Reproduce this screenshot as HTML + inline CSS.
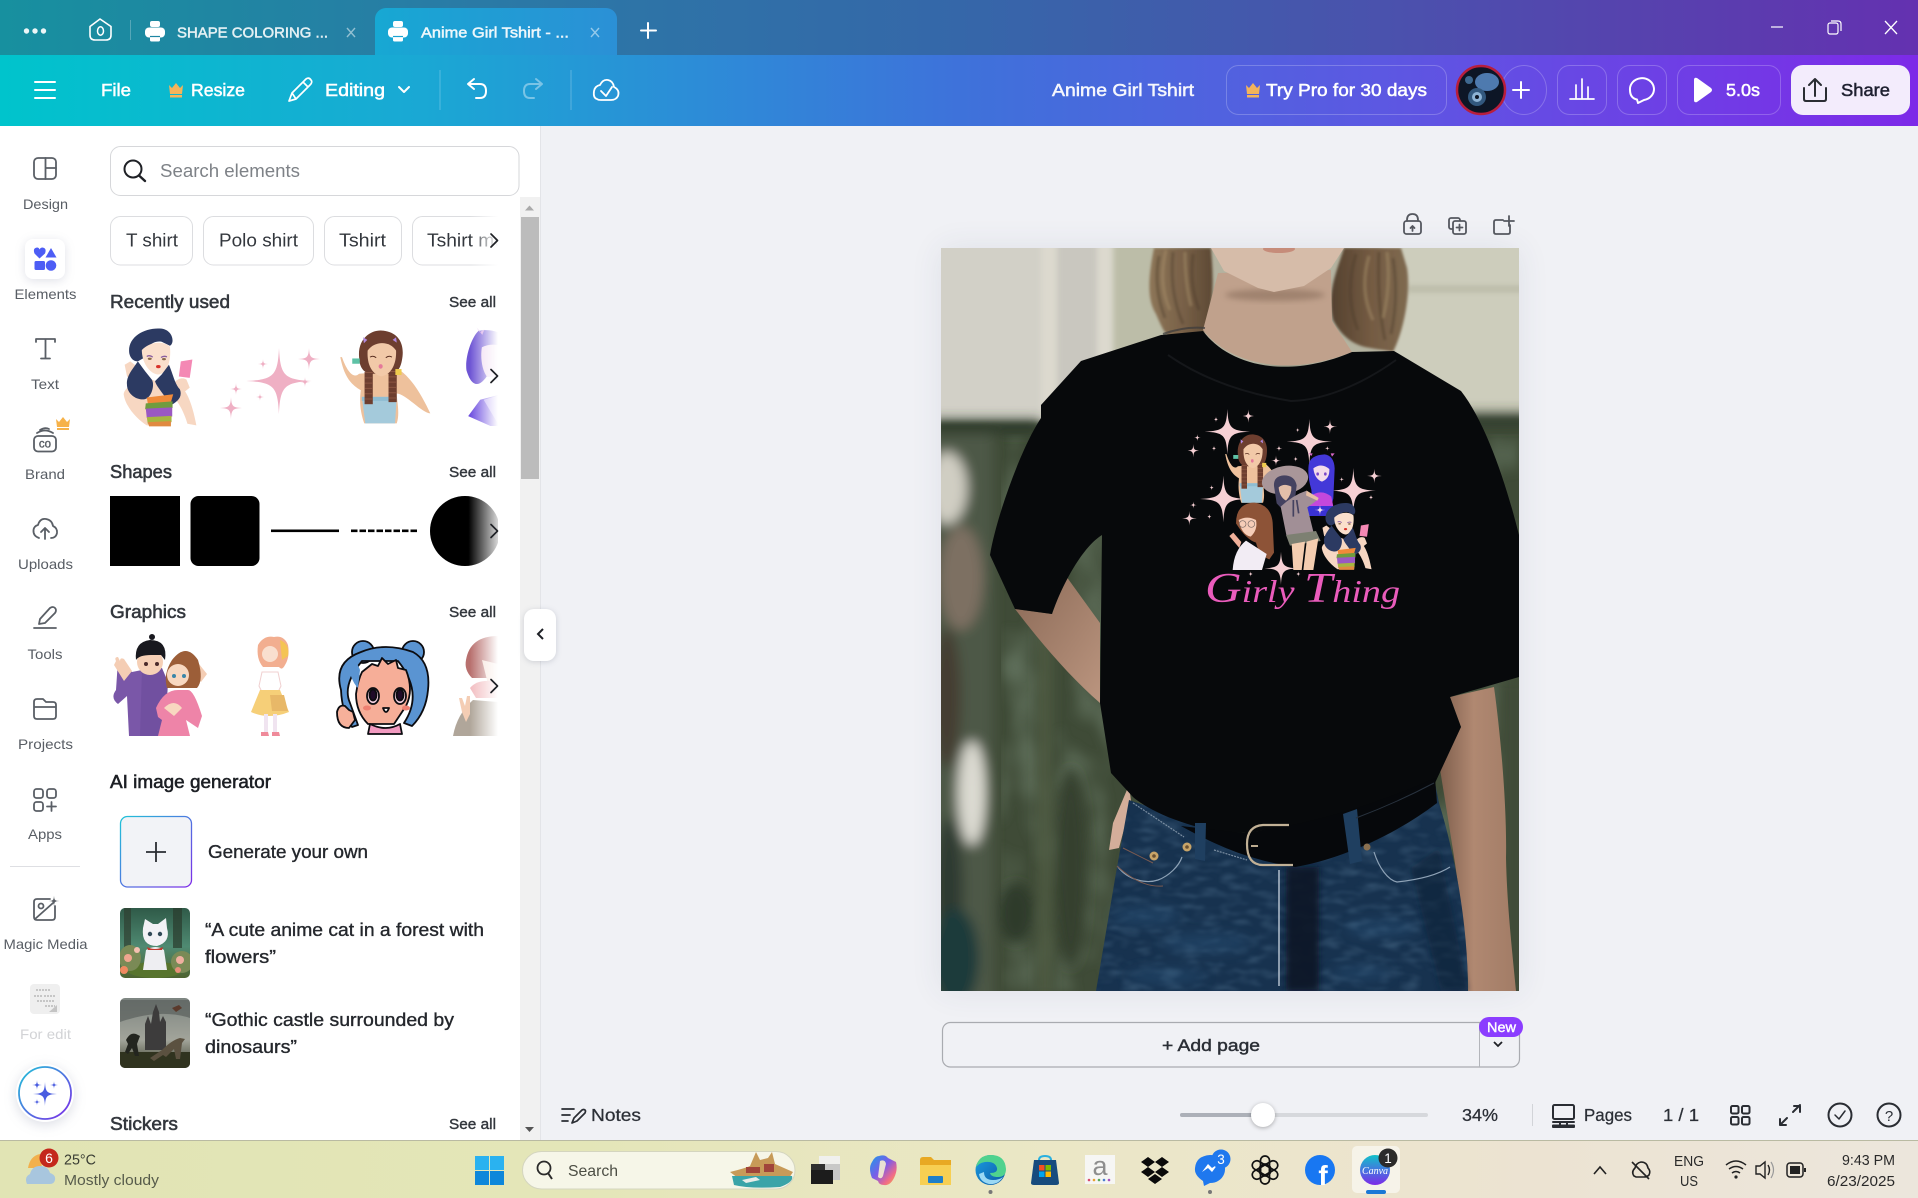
<!DOCTYPE html>
<html lang="en"><head><meta charset="utf-8"><title>Anime Girl Tshirt</title>
<style>
html,body{margin:0;padding:0;width:1918px;height:1198px;overflow:hidden;background:#f0f1f5}
.a{position:absolute}
#title{left:0;top:0;width:1918px;height:55px;background:linear-gradient(90deg,#17909f 0%,#2a7aa6 25%,#3567a9 50%,#4a52ad 72%,#6431b0 100%)}
#tool{left:0;top:55px;width:1918px;height:71px;background:linear-gradient(90deg,#00c4cc 0%,#1aa8d4 22%,#3e72da 50%,#5c58e2 72%,#7d2ae8 100%)}
#tab{left:375px;top:8px;width:242px;height:47px;border-radius:11px 11px 0 0;background:linear-gradient(90deg,#17a8d3,#2b90d6)}
#rail{left:0;top:126px;width:540px;height:1014px;background:#fff}
#track{left:520px;top:197px;width:20px;height:943px;background:#f1f1f1}
#thumb{left:521px;top:217px;width:18px;height:262px;background:#bcbcbc}
#line{left:540px;top:126px;width:1px;height:1014px;background:#e3e4e8}
#shadow{left:941px;top:248px;width:578px;height:743px;box-shadow:0 0 30px rgba(60,70,100,.09)}
#task{left:0;top:1140px;width:1918px;height:58px;background:linear-gradient(90deg,#e1e4b4 0%,#e4e6b8 30%,#ebe7c6 55%,#ece3d2 80%,#ece6dc 100%);border-top:1px solid #b9baa2;box-sizing:border-box}
svg{position:absolute;left:0;top:0}
text{font-family:"Liberation Sans","DejaVu Sans",sans-serif}
.w{fill:#fff;stroke:#fff;stroke-width:.5}
.lb{fill:#585d64;font-size:14px}
.ch{fill:#33373d;font-size:18px}
.hd{fill:#33373d;stroke:#33373d;stroke-width:.55;font-size:18px}
.sa{fill:#33373d;stroke:#33373d;stroke-width:.4;font-size:15px}
.bd{fill:#24272c;stroke:#24272c;stroke-width:.35;font-size:18px}
.tb{fill:#3a3d33;font-size:15px}
.ic{fill:none;stroke:#5a5f66;stroke-width:1.8;stroke-linecap:round;stroke-linejoin:round}
.wi{fill:none;stroke:#fff;stroke-width:2;stroke-linecap:round;stroke-linejoin:round}
.dk{fill:none;stroke:#2a2d33;stroke-width:2;stroke-linecap:round;stroke-linejoin:round}
.cv{fill:none;stroke:#1f2126;stroke-width:1.7;stroke-linecap:round;stroke-linejoin:round}
</style></head><body>
<div class="a" id="title"></div>
<div class="a" id="tool"></div>
<div class="a" id="tab"></div>
<div class="a" id="rail"></div>
<div class="a" id="track"></div>
<div class="a" id="thumb"></div>
<div class="a" id="line"></div>
<div class="a" id="shadow"></div>
<div class="a" id="task"></div>

<svg width="1918" height="1198" viewBox="0 0 1918 1198">
<defs>
<path id="st" d="M0-100C4-16 16-4 100 0C16 4 4 16 0 100C-4 16-16 4-100 0C-16-4-4-16 0-100Z"/>
<filter id="b12" x="-20%" y="-20%" width="140%" height="140%"><feGaussianBlur stdDeviation="6"/></filter>
<filter id="b3" x="-30%" y="-30%" width="160%" height="160%"><feGaussianBlur stdDeviation="3"/></filter>
<filter id="b1" x="-5%" y="-5%" width="110%" height="110%"><feGaussianBlur stdDeviation="1.300"/></filter>
<filter id="nG" x="0" y="0" width="100%" height="100%"><feTurbulence type="fractalNoise" baseFrequency=".03 .018" numOctaves="2" seed="4"/><feColorMatrix values="0 0 0 0 .13  0 0 0 0 .18  0 0 0 0 .12  2.400 0 0 0 -.95"/><feGaussianBlur stdDeviation="4"/></filter>
<filter id="nJ" x="0" y="0" width="100%" height="100%"><feTurbulence type="fractalNoise" baseFrequency=".05 .14" numOctaves="2" seed="8"/><feColorMatrix values="0 0 0 0 .2  0 0 0 0 .36  0 0 0 0 .52  2 0 0 0 -.9"/><feGaussianBlur stdDeviation="1.200"/></filter>
<clipPath id="jc"><path d="M188 552L175 625L155 743H527C527 680 515 610 498 555L494 535L300 590Z"/></clipPath>
<linearGradient id="gb" x1="0" y1="0" x2="1" y2="1"><stop offset="0" stop-color="#1fc4d8"/><stop offset="1" stop-color="#7d2ae8"/></linearGradient>
<linearGradient id="fade" x1="0" x2="1"><stop offset="0" stop-color="#fff" stop-opacity="0"/><stop offset="1" stop-color="#fff"/></linearGradient>
<linearGradient id="circ" x1="0" x2="1"><stop offset="0" stop-color="#000"/><stop offset=".55" stop-color="#000"/><stop offset="1" stop-color="#000" stop-opacity=".1"/></linearGradient>
<linearGradient id="cv" x1="0" y1="0" x2="0" y2="1"><stop offset="0" stop-color="#12c2c9"/><stop offset=".55" stop-color="#4a6fe0"/><stop offset="1" stop-color="#7d2ae8"/></linearGradient>
<linearGradient id="edge" x1="0" y1="0" x2="1" y2="1"><stop offset="0" stop-color="#1b9de2"/><stop offset="1" stop-color="#0c59a4"/></linearGradient>
<linearGradient id="cat" x1="0" y1="0" x2="0" y2="1"><stop offset="0" stop-color="#2f5a48"/><stop offset=".55" stop-color="#4f8a72"/><stop offset="1" stop-color="#4e6330"/></linearGradient>
<linearGradient id="cas" x1="0" y1="0" x2="0" y2="1"><stop offset="0" stop-color="#7d8581"/><stop offset=".6" stop-color="#a2a49a"/><stop offset="1" stop-color="#3b3f2c"/></linearGradient>
<linearGradient id="cop" x1="0" y1="0" x2="1" y2="1"><stop offset="0" stop-color="#1b9be8"/><stop offset=".45" stop-color="#7c5ce8"/><stop offset=".75" stop-color="#ef6a8a"/><stop offset="1" stop-color="#f8b73a"/></linearGradient>
<linearGradient id="armg" x1="0" x2="1"><stop offset="0" stop-color="#7e5e4c"/><stop offset=".45" stop-color="#b08871"/><stop offset="1" stop-color="#a27c66"/></linearGradient>
<linearGradient id="arml" x1="0" y1="0" x2="1" y2="1"><stop offset="0" stop-color="#8b6a57"/><stop offset="1" stop-color="#bb957f"/></linearGradient>
<linearGradient id="hairL" x1="0" x2="1"><stop offset="0" stop-color="#8d7658"/><stop offset=".5" stop-color="#7a6249"/><stop offset="1" stop-color="#5d4934"/></linearGradient>
<linearGradient id="hairR" x1="0" x2="1"><stop offset="0" stop-color="#54412f"/><stop offset=".5" stop-color="#735a42"/><stop offset="1" stop-color="#7f6a50"/></linearGradient>

<symbol id="gA" viewBox="350 585 230 305" preserveAspectRatio="none">
<path d="M355 790C358 770 375 770 385 745L440 745L500 770C530 740 560 800 575 885L548 880C540 850 520 810 505 800L498 885H425C400 870 360 830 355 790Z" fill="#f7d7c2"/>
<path d="M365 735L358 700L375 690L395 705L405 745L390 760Z" fill="#f7d7c2"/>
<path d="M500 775C505 750 525 735 545 745L555 770L530 790Z" fill="#f7d7c2"/>
<path d="M372 665C365 615 420 585 470 590C505 595 510 635 495 642L470 630C440 625 420 650 415 680L398 690C385 690 375 680 372 665Z" fill="#2c3a62"/>
<path d="M410 655C440 625 480 630 495 645C500 690 485 730 458 730C430 725 410 690 410 655Z" fill="#fadfcc"/>
<path d="M398 690L420 720L440 745C450 760 440 800 420 805C395 810 365 790 365 760C362 735 385 710 398 690Z" fill="#2c3a62"/>
<path d="M470 730L492 700C505 730 510 760 525 775C535 800 515 815 495 825C480 790 455 770 450 750Z" fill="#2c3a62"/>
<path d="M425 675q8-6 18 2M468 678q8-6 18-2" stroke="#8a5ea0" stroke-width="4" fill="none"/>
<ellipse cx="434" cy="682" rx="6" ry="3.500" fill="#8a6a4a"/><ellipse cx="477" cy="683" rx="6" ry="3.500" fill="#8a6a4a"/>
<ellipse cx="460" cy="706" rx="7" ry="5" fill="#d8322a"/>
<path d="M425 800L505 790L495 825L430 830Z" fill="#f08a3a"/>
<path d="M422 818L503 812V832L420 836Z" fill="#6f9c3f"/>
<path d="M422 834L502 830V858L425 862Z" fill="#9a58c2"/>
<path d="M425 860L500 856V875L428 880Z" fill="#a6b640"/>
<path d="M428 875L498 872V888H432Z" fill="#e08a40"/>
<path d="M528 690L563 684L555 740L522 736Z" fill="#f488b4"/>
</symbol>

<symbol id="gB" viewBox="955 595 298 290" preserveAspectRatio="none">
<path d="M985 680C995 730 1010 760 1045 780C1040 820 1045 850 1055 880H1150C1160 850 1150 810 1150 790C1175 790 1225 850 1248 850C1230 810 1200 750 1160 720L1040 730C1020 750 1000 710 990 680Z" fill="#eec19c"/>
<path d="M1048 800H1150L1145 880H1058Z" fill="#a4cadb"/>
<path d="M1048 800H1150V812H1048Z" fill="#8fbdd2"/>
<path d="M1040 680C1035 620 1080 595 1110 600C1155 605 1175 640 1165 690C1160 720 1145 730 1135 730L1070 730C1050 725 1040 705 1040 680Z" fill="#6d3e2f"/>
<path d="M1068 725V822M1138 722V816" stroke="#6d3e2f" stroke-width="24" fill="none"/>
<path d="M1068 725V822M1138 722V816" stroke="#8b5541" stroke-width="24" stroke-dasharray="3 13" fill="none"/>
<path d="M1065 660C1085 630 1130 630 1148 660C1150 705 1130 735 1105 738C1080 733 1062 705 1065 660Z" fill="#f2c9a8"/>
<path d="M1072 680q9-6 18 2M1118 682q9-8 18-2" stroke="#5a2e20" stroke-width="3" fill="none"/>
<ellipse cx="1103" cy="708" rx="6" ry="7" fill="#e5799a"/>
<path d="M1020 684h22v16h-22z" fill="#5ec2a6"/><path d="M1146 716h18v18h-18z" fill="#eecb4e"/>
<path d="M1052 620l12 8-10 10zM1148 620l-10 8 12 8z" fill="#b088de"/>
</symbol>

<symbol id="gC" viewBox="1340 585 160 305" preserveAspectRatio="none">
<path d="M1385 600C1430 590 1490 610 1500 690V810C1460 800 1430 740 1420 720C1400 760 1370 790 1350 720C1345 680 1365 620 1385 600Z" fill="#6e55d4"/>
<path d="M1395 650C1430 630 1480 650 1500 670V740H1410C1395 720 1390 680 1395 650Z" fill="#efd8f0"/>
<path d="M1355 860L1390 810L1500 780V890H1420Z" fill="#6e4fe0"/>
<path d="M1400 810L1500 780V890L1440 880Z" fill="#b8a4f4"/>
<path d="M1380 590l8 14 14-8-6 16z" fill="#d4a0e4"/>
</symbol>
</defs>

<!-- TITLE BAR -->
<g fill="#fff" opacity=".92"><circle cx="26.500" cy="31" r="2.700"/><circle cx="35" cy="31" r="2.700"/><circle cx="43.500" cy="31" r="2.700"/></g>
<path d="M90 26.500L100 19L111 26.500V35Q111 40 106 40H95Q90 40 90 35Z" fill="none" stroke="#fff" stroke-width="1.600" stroke-linejoin="round"/>
<ellipse cx="100.500" cy="31" rx="3" ry="4.200" fill="none" stroke="#fff" stroke-width="1.500"/>
<rect x="130" y="20" width="1" height="20" fill="#fff" opacity=".25"/>
<g fill="#fff"><rect x="150" y="21" width="10" height="6" rx="2"/><rect x="145" y="27.500" width="20" height="10" rx="4"/><rect x="150" y="36.500" width="10" height="5" rx="1.500"/></g>
<path d="M150 36.500h10" stroke="#1d86a3" stroke-width="1.200"/>
<g fill="#fff"><rect x="393" y="21" width="10" height="6" rx="2"/><rect x="388" y="27.500" width="20" height="10" rx="4"/><rect x="393" y="36.500" width="10" height="5" rx="1.500"/></g>
<path d="M393 36.500h10" stroke="#1aa3d3" stroke-width="1.200"/>
<text x="177" y="37.500" font-size="15" class="w" opacity=".88" textLength="151" lengthAdjust="spacingAndGlyphs">SHAPE COLORING ...</text>
<text x="421" y="37.500" font-size="15" class="w" opacity=".92" textLength="148" lengthAdjust="spacingAndGlyphs">Anime Girl Tshirt - ...</text>
<path d="M347 28l8 9M355 28l-8 9" stroke="#fff" stroke-opacity=".5" stroke-width="1.400"/>
<path d="M591 28l8 9M599 28l-8 9" stroke="#fff" stroke-opacity=".5" stroke-width="1.400"/>
<path d="M648 23v15M641 30.500h15" class="wi"/>
<path d="M1771 27h12" stroke="#fff" stroke-width="1.200"/>
<rect x="1828" y="23" width="10" height="11" rx="2" fill="none" stroke="#fff" stroke-width="1.200"/><path d="M1831 21h7q3 0 3 3v7" fill="none" stroke="#fff" stroke-width="1.200"/>
<path d="M1885 21l12 13M1897 21l-12 13" stroke="#fff" stroke-width="1.300"/>

<!-- TOOLBAR -->
<path d="M35 82h20M35 90h20M35 98h20" class="wi"/>
<text x="101" y="96" font-size="17.500" class="w" textLength="30" lengthAdjust="spacingAndGlyphs">File</text>
<path d="M169 85l3 3 4-5 4 5 3-3-1 9h-12zM170 95h12v2.500h-12z" fill="#f4b45a"/>
<text x="191" y="96" font-size="17.500" class="w" textLength="54" lengthAdjust="spacingAndGlyphs">Resize</text>
<path class="wi" d="M292 93L306 79Q309 77 311 80Q313 82 310 85L296 99L289 101ZM303 82l5 5M292 93l4 6" style="stroke-width:1.700"/>
<text x="325" y="96" font-size="17.500" class="w" textLength="60" lengthAdjust="spacingAndGlyphs">Editing</text>
<path class="wi" d="M399 87l5 5 5-5"/>
<rect x="439.500" y="70" width="1" height="40" fill="#fff" opacity=".25"/>
<path class="wi" d="M469 84h11q6 0 6 7t-6 7h-4M474 79l-6 5 6 5"/>
<path class="wi" opacity=".4" d="M541 84h-11q-6 0-6 7t6 7h4M536 79l6 5-6 5"/>
<rect x="570.500" y="70" width="1" height="40" fill="#fff" opacity=".25"/>
<path class="wi" d="M597 99Q593 98 594 91Q595 86 600 85Q603 79 608 80Q613 81 614 87Q620 90 618 96Q616 100 611 100H601Q598 100 597 99ZM601 91l5 5 6-9" style="stroke-width:1.800"/>
<text x="1052" y="96" font-size="17.500" class="w" opacity=".95" textLength="142" lengthAdjust="spacingAndGlyphs">Anime Girl Tshirt</text>
<rect x="1226.500" y="65.500" width="220" height="49" rx="12" fill="none" stroke="#fff" stroke-opacity=".22"/>
<path d="M1246 85l3 3 4-5 4 5 3-3-1 9h-12zM1247 95h12v2.500h-12z" fill="#f4b45a"/>
<text x="1266" y="96" font-size="17.500" class="w" textLength="161" lengthAdjust="spacingAndGlyphs">Try Pro for 30 days</text>
<rect x="1501.500" y="65.500" width="45" height="49" rx="24.500" fill="none" stroke="#fff" stroke-opacity=".22"/>
<path d="M1521 82v16M1513 90h16" class="wi"/>
<circle cx="1481" cy="90" r="24" fill="#0d1626" stroke="#b81e3c" stroke-width="2.500"/>
<ellipse cx="1487" cy="82" rx="12" ry="9" fill="#5a8cc8" opacity=".85"/>
<circle cx="1477" cy="97" r="9" fill="#32587e"/><circle cx="1477" cy="97" r="5" fill="#8eb4d6"/><circle cx="1477" cy="97" r="2" fill="#0d1626"/>
<circle cx="1469" cy="80" r="4" fill="#3e6890"/>
<rect x="1557.500" y="65.500" width="49" height="49" rx="12" fill="none" stroke="#fff" stroke-opacity=".22"/>
<path class="wi" style="stroke-width:1.700" d="M1570 99h24M1576 99V85M1582 99V79M1588 99V87"/>
<rect x="1617.500" y="65.500" width="49" height="49" rx="12" fill="none" stroke="#fff" stroke-opacity=".22"/>
<path class="wi" d="M1630 90a12 11 0 1 1 14 10l-6 3-1-3.500Q1630 98 1630 90Z"/>
<rect x="1677.500" y="65.500" width="103" height="49" rx="12" fill="none" stroke="#fff" stroke-opacity=".22"/>
<path d="M1694 80Q1694 77 1697 78L1711 88Q1713 90 1711 92L1697 102Q1694 103 1694 100Z" fill="#fff"/>
<text x="1726" y="96" font-size="17.500" class="w" textLength="34" lengthAdjust="spacingAndGlyphs">5.0s</text>
<rect x="1791" y="65" width="119" height="50" rx="12" fill="#f3ecfc"/>
<path class="dk" d="M1815 96V79M1809 85l6-6 6 6M1804 88v11q0 2 2 2h18q2 0 2-2V88"/>
<text x="1841" y="96" font-size="17.500" fill="#1e2030" stroke="#1e2030" stroke-width=".5" textLength="49" lengthAdjust="spacingAndGlyphs">Share</text>

<!-- LEFT RAIL -->
<g class="ic"><rect x="34" y="158" width="22" height="21" rx="4"/><path d="M45.500 158v21M45.500 168H56"/></g>
<text x="23" y="209" class="lb" textLength="45" lengthAdjust="spacingAndGlyphs">Design</text>
<rect x="25" y="239" width="40" height="40" rx="8" fill="#fff" filter="drop-shadow(0 2px 5px rgba(60,70,110,.16))"/>
<g fill="#4d5df5"><path d="M39.500 258.500L34.500 253.500Q32.500 248 37 247.500Q39 247.500 39.500 249.500Q40.500 247.500 42.500 247.500Q47 248 45 253.500Z"/><path d="M51 248l5.500 9.500h-11z"/><rect x="34.500" y="261" width="10.500" height="9" rx="1.500"/><circle cx="51" cy="265.500" r="5.300"/></g>
<text x="14.500" y="299" class="lb" textLength="62" lengthAdjust="spacingAndGlyphs">Elements</text>
<path class="ic" d="M36 342v-3h19v3M45.500 339v19M41 358.500h9"/>
<text x="31" y="389" class="lb" textLength="28" lengthAdjust="spacingAndGlyphs">Text</text>
<path d="M56 419l3 3 4-5 4 5 3-3-1 8h-12zM57 428h12v2h-12z" fill="#f6b24a"/>
<g class="ic"><rect x="34" y="436" width="22" height="15.500" rx="4"/><path d="M37 433q8-5 16 0M40 430q5-3 9-1"/></g>
<text x="45" y="447.500" font-size="11.500" fill="#5a5f66" stroke="#5a5f66" stroke-width=".4" text-anchor="middle">co</text>
<text x="25" y="479" class="lb" textLength="40" lengthAdjust="spacingAndGlyphs">Brand</text>
<path class="ic" d="M39 538Q33 536 33.500 530Q34 526 38 525Q40 518 46 519Q52 520 53 526Q57.500 528 57 533Q56 538 51 538M45 539V528M41 532l4-4 4 4"/>
<text x="18" y="569" class="lb" textLength="55" lengthAdjust="spacingAndGlyphs">Uploads</text>
<path class="ic" d="M40 619l10-11q3-2 5 0t0 5l-10 10-6 1ZM34 628h22"/>
<text x="27.500" y="659" class="lb" textLength="35" lengthAdjust="spacingAndGlyphs">Tools</text>
<path class="ic" d="M34 716V702q0-3 3-3h6l3 3h7q3 0 3 3v11q0 3-3 3H37q-3 0-3-3ZM34 707h22"/>
<text x="18" y="749" class="lb" textLength="55" lengthAdjust="spacingAndGlyphs">Projects</text>
<g class="ic"><rect x="34" y="789" width="9" height="9" rx="2.500"/><rect x="47" y="789" width="9" height="9" rx="2.500"/><rect x="34" y="802" width="9" height="9" rx="2.500"/><path d="M51.500 802v9M47 806.500h9"/></g>
<text x="28" y="839" class="lb" textLength="34" lengthAdjust="spacingAndGlyphs">Apps</text>
<rect x="10" y="866" width="70" height="1" fill="#dedfe3"/>
<g class="ic"><path d="M50 899H37q-3 0-3 3v15q0 3 3 3h15q3 0 3-3V906"/><path d="M35 919l18-16"/><circle cx="41" cy="906" r="2.500"/></g>
<use href="#st" transform="translate(54,901) scale(.055)" fill="#5a5f66"/>
<text x="3.500" y="949" class="lb" textLength="84" lengthAdjust="spacingAndGlyphs">Magic Media</text>
<rect x="30" y="984" width="30" height="30" rx="4" fill="#efefef"/>
<path d="M36 990h14M34 996h8M44 996h12M37 1001h18M45 1006h10" stroke="#b8b8b8" stroke-width="1.600" stroke-dasharray="2 1"/>
<path d="M49 1012l8-7v7z" fill="#c4c4c4"/>
<text x="20" y="1039" font-size="14" fill="#d2d3d6" textLength="51" lengthAdjust="spacingAndGlyphs">For edit</text>
<circle cx="45" cy="1093" r="29" fill="#fff" filter="drop-shadow(0 3px 6px rgba(60,70,110,.18))"/>
<circle cx="45" cy="1093" r="26" fill="#fff" stroke="url(#gb)" stroke-width="1.800"/>
<g fill="#4a5de0"><use href="#st" transform="translate(45,1094) scale(.12)"/><use href="#st" transform="translate(37,1085) scale(.05)"/><use href="#st" transform="translate(54,1085) scale(.04)"/><use href="#st" transform="translate(37,1102) scale(.035)"/></g>

<!-- SEARCH + CHIPS -->
<rect x="110.500" y="146.500" width="408.500" height="49" rx="10" fill="#fff" stroke="#d6d7da"/>
<circle cx="133" cy="169" r="8.500" fill="none" stroke="#1f2126" stroke-width="2"/><path d="M139 175.500l6 5.500" stroke="#1f2126" stroke-width="2.400" stroke-linecap="round"/>
<text x="160" y="177" font-size="18" fill="#7e8287" textLength="140" lengthAdjust="spacingAndGlyphs">Search elements</text>
<g fill="#fff" stroke="#dcdde0"><rect x="110.500" y="216.500" width="82" height="48.500" rx="10"/><rect x="203.500" y="216.500" width="110" height="48.500" rx="10"/><rect x="324.500" y="216.500" width="77" height="48.500" rx="10"/><rect x="412.500" y="216.500" width="100" height="48.500" rx="10"/></g>
<text x="126" y="246.500" class="ch" textLength="52" lengthAdjust="spacingAndGlyphs">T shirt</text>
<text x="219" y="246.500" class="ch" textLength="79" lengthAdjust="spacingAndGlyphs">Polo shirt</text>
<text x="339" y="246.500" class="ch" textLength="47" lengthAdjust="spacingAndGlyphs">Tshirt</text>
<text x="427" y="246.500" class="ch" textLength="78" lengthAdjust="spacingAndGlyphs">Tshirt mo</text>
<rect x="470" y="214" width="28" height="53" fill="url(#fade)"/><rect x="498" y="214" width="21" height="53" fill="#fff"/>
<path class="cv" d="M491 234l6.500 6.500-6.500 6.500"/>

<!-- SECTIONS -->
<text x="110" y="308" class="hd" textLength="120" lengthAdjust="spacingAndGlyphs">Recently used</text>
<text x="449" y="307" class="sa" textLength="47" lengthAdjust="spacingAndGlyphs">See all</text>
<use href="#gA" x="122" y="327" width="76" height="100"/>
<g fill="#efb0c4"><use href="#st" transform="translate(279,381) scale(.33,.33)"/><use href="#st" transform="translate(309,359) scale(.11)"/><use href="#st" transform="translate(263,364) scale(.05)"/><use href="#st" transform="translate(236,389) scale(.06)"/><use href="#st" transform="translate(231,408) scale(.11)"/><use href="#st" transform="translate(260,397) scale(.04)"/><use href="#st" transform="translate(305,382) scale(.05)"/></g>
<use href="#gB" x="330" y="329" width="102" height="96"/>
<use href="#gC" x="463" y="326" width="55" height="100"/>
<rect x="470" y="324" width="28" height="106" fill="url(#fade)"/><rect x="498" y="324" width="21" height="106" fill="#fff"/>
<path class="cv" d="M491 369.500l6.500 6.500-6.500 6.500"/>

<text x="110" y="478" class="hd" textLength="62" lengthAdjust="spacingAndGlyphs">Shapes</text>
<text x="449" y="477" class="sa" textLength="47" lengthAdjust="spacingAndGlyphs">See all</text>
<rect x="110" y="496" width="70" height="70"/>
<rect x="190.500" y="496" width="69" height="70" rx="8"/>
<rect x="271" y="529.500" width="68" height="2.600"/>
<path d="M351 530.800h66" stroke="#000" stroke-width="2.600" stroke-dasharray="6.500 2"/>
<circle cx="465" cy="531" r="35" fill="url(#circ)"/>
<rect x="498" y="494" width="21" height="74" fill="#fff"/>
<path class="cv" d="M491 524.500l6.500 6.500-6.500 6.500"/>

<text x="110" y="618" class="hd" textLength="76" lengthAdjust="spacingAndGlyphs">Graphics</text>
<text x="449" y="617" class="sa" textLength="47" lengthAdjust="spacingAndGlyphs">See all</text>
<!-- couple -->
<g>
<path d="M118 660l14 12 10-2 5 66h-18l-2-40-9 8q-8-6-2-14Z" fill="#7a57a8"/>
<path d="M142 668h20l6 14-3 54h-25Z" fill="#7150a0"/>
<path d="M114 665l10 16 8-10-8-12q-4-2-4 2l-2-4q-4 0-2 4Z" fill="#f4cdb4"/>
<circle cx="150" cy="662" r="13" fill="#f6d0b6"/>
<path d="M136 660q-2-18 14-20 18 0 15 20l-4-5-10 0q-12 0-15 5Z" fill="#19191f"/>
<circle cx="152" cy="637" r="3" fill="#19191f"/>
<circle cx="146" cy="664" r="2" fill="#4a2a2a"/><circle cx="157" cy="664" r="2" fill="#4a2a2a"/>
<path d="M191 672l10 10 6-8-8-10-4-4-2 6Z" fill="#f4cdb4"/>
<path d="M172 660q14-18 26 0 6 20-1 28h-30q-4-14 5-28Z" fill="#9c5e38"/>
<circle cx="178" cy="675" r="11" fill="#f8d8c0"/>
<circle cx="174" cy="676" r="2" fill="#3a86a8"/><circle cx="184" cy="676" r="2" fill="#3a86a8"/>
<path d="M156 708q8-18 22-18h10q6 0 14 26l-4 12-12-8 4 16h-32l4-16-4-3Z" fill="#ee84a8"/>
<path d="M164 708q10-10 18 0l-8 8Z" fill="#f8d8c0"/>
</g>
<!-- pink dress girl -->
<g>
<path d="M258 645q6-10 16-8 10-2 14 8 2 12-3 20-3 6-6 2h-16q-7-8-5-22Z" fill="#f2ae90"/>
<path d="M280 640q10 4 8 16l-6 4Z" fill="#f4c454"/>
<circle cx="270" cy="654" r="8" fill="#f9dfcf"/>
<path d="M262 672h16l3 14-3 6h-16l-3-6Z" fill="#fff" stroke="#f0d0d0"/>
<path d="M260 690h20l9 22q-20 8-38 0Z" fill="#f6cf78"/>
<path d="M270 695h14l4 16h-16Z" fill="#e8b868"/>
<path d="M264 714h4v18h-4zM273 714h4v18h-4z" fill="#f0e4f0"/>
<path d="M261 732h7l1 4h-8zM272 732h7l1 4h-8z" fill="#ef8a9a"/>
</g>
<!-- blue chibi -->
<g stroke="#0c0c10" stroke-width="1.800" stroke-linejoin="round">
<circle cx="363" cy="652" r="11" fill="#5a94d2"/><circle cx="413" cy="652" r="11" fill="#5a94d2"/>
<path d="M341 690q-8-28 20-38 24-10 52 0 18 10 15 38-2 22-16 36l-8-3q20-30-6-62l-36 0q-20 24-12 42l8 22-6 2q-10-14-11-37Z" fill="#5a94d2"/>
<path d="M362 672l10-8 6 2 4-8 6 6 8-4 2 8 8 2q8 20 0 36l-12 18h-26q-12-12-12-30Q358 680 362 672Z" fill="#f6ae98"/>
<path d="M348 662q8-4 12 8l-2 18q-8-8-10-26Z" fill="#5a94d2" stroke="none"/>
<ellipse cx="373" cy="696" rx="6" ry="8" fill="#f4d0e0"/><ellipse cx="400" cy="696" rx="6" ry="8" fill="#f4d0e0"/>
<ellipse cx="373" cy="695" rx="3.500" ry="5.500" fill="#1f0b28"/><ellipse cx="400" cy="695" rx="3.500" ry="5.500" fill="#1f0b28"/>
<path d="M383 708q3 8 6 0Z" fill="#fff"/>
<path d="M337 712q2-8 8-6l4 4 4 2 2 8-6 8q-12 0-12-16Z" fill="#f6b09a"/>
<path d="M370 724q16 8 30 0l2 10h-34Z" fill="#f29ac0"/>
</g>
<ellipse cx="367" cy="708" rx="4" ry="2.500" fill="#ee8072"/><ellipse cx="406" cy="708" rx="4" ry="2.500" fill="#ee8072"/>
<!-- pink scarf girl -->
<g>
<path d="M466 660q4-24 32-24v42h-26q-8-8-6-18Z" fill="#b8706e"/>
<path d="M482 660l16 4v20h-10Z" fill="#f5dfd4"/>
<path d="M470 688q8-10 28-6v16h-22Z" fill="#f2bcc0"/>
<path d="M453 736q4-22 20-36l25 2v34Z" fill="#b0a69a"/>
<path d="M462 712l-3-14 3 0 3 8 2-10 3 0 0 18-4 8Z" fill="#f4cdb4"/>
</g>
<rect x="470" y="634" width="28" height="104" fill="url(#fade)"/><rect x="498" y="634" width="21" height="104" fill="#fff"/>
<path class="cv" d="M491 679.500l6.500 6.500-6.500 6.500"/>

<text x="110" y="788" class="hd" style="fill:#1c1f24;stroke:#1c1f24" textLength="161" lengthAdjust="spacingAndGlyphs">AI image generator</text>
<rect x="120.500" y="816.500" width="71" height="70.500" rx="7" fill="#f2f3f7" stroke="url(#gb)" stroke-width="1.300"/>
<path d="M156 842v20M146 852h20" stroke="#2a2d33" stroke-width="1.800"/>
<text x="208" y="858" class="bd" textLength="160" lengthAdjust="spacingAndGlyphs">Generate your own</text>

<clipPath id="c1"><rect x="120" y="908" width="70" height="70" rx="5"/></clipPath>
<g clip-path="url(#c1)"><rect x="120" y="908" width="70" height="70" fill="url(#cat)"/>
<rect x="124" y="908" width="7" height="42" fill="#2f3f30" opacity=".7"/><rect x="173" y="908" width="9" height="40" fill="#2a3a2c" opacity=".7"/>
<ellipse cx="155" cy="970" rx="28" ry="8" fill="#58742e"/>
<ellipse cx="130" cy="958" rx="11" ry="13" fill="#7a8a56"/><ellipse cx="182" cy="962" rx="11" ry="11" fill="#7a8a56"/>
<circle cx="128" cy="958" r="4" fill="#f0a68e"/><circle cx="124" cy="970" r="4" fill="#f08a60"/><circle cx="180" cy="960" r="4" fill="#f0b0a0"/><circle cx="178" cy="970" r="3" fill="#e8907a"/><circle cx="137" cy="950" r="3" fill="#f4c0b0"/>
<path d="M146 950q10-6 18 0l3 20h-24Z" fill="#eeeef2"/>
<path d="M143 928l2-9 8 5h5l8-6 1 10q4 14-10 18-16 0-14-18Z" fill="#f2f2f6"/>
<circle cx="150" cy="934" r="2.200" fill="#324a58"/><circle cx="160" cy="934" r="2.200" fill="#324a58"/>
<path d="M147 947q8 4 16 0l-1 3h-14Z" fill="#c0392f"/></g>
<text x="205" y="936" class="bd" textLength="279" lengthAdjust="spacingAndGlyphs">“A cute anime cat in a forest with</text>
<text x="205" y="963" class="bd" textLength="71" lengthAdjust="spacingAndGlyphs">flowers”</text>

<clipPath id="c2"><rect x="120" y="998" width="70" height="70" rx="5"/></clipPath>
<g clip-path="url(#c2)"><rect x="120" y="998" width="70" height="70" fill="url(#cas)"/>
<path d="M120 1000h70v18q-30-10-70 4Z" fill="#5a605c" opacity=".7"/>
<path d="M145 1050v-26l3-8 3 8 2-12 3-8 3 8 1 10 3-6 3 6v28Z" fill="#3d3c3c"/>
<rect x="120" y="1052" width="70" height="16" fill="#30331f"/>
<path d="M126 1040q4-8 10-6l4 2-3 8 2 12-4 0-3-8-4 6-3-2 3-8Z" fill="#23251f"/>
<path d="M150 1058l12-8q10-10 18-12l5 1-3 4-2 16-4 0-2-10-8 8-3-2-9 6Z" fill="#5b5140"/>
<path d="M172 1008l7-3 3 3-6 4Z" fill="#5b3a2c"/></g>
<text x="205" y="1026" class="bd" textLength="249" lengthAdjust="spacingAndGlyphs">“Gothic castle surrounded by</text>
<text x="205" y="1053" class="bd" textLength="92" lengthAdjust="spacingAndGlyphs">dinosaurs”</text>

<text x="110" y="1130" class="hd" textLength="68" lengthAdjust="spacingAndGlyphs">Stickers</text>
<text x="449" y="1129" class="sa" textLength="47" lengthAdjust="spacingAndGlyphs">See all</text>

<!-- scrollbar arrows -->
<path d="M525 210.500h9l-4.500-5z" fill="#aaa"/><path d="M525 1127h9l-4.500 5z" fill="#555"/>
<!-- collapse handle -->
<rect x="524" y="609" width="32" height="52" rx="10" fill="#fff" filter="drop-shadow(0 1px 3px rgba(40,50,80,.18))"/>
<path d="M543 629l-5 5 5 5" fill="none" stroke="#1e2026" stroke-width="2"/>

<!-- CANVAS ICONS -->
<g class="ic" style="stroke:#55585f"><rect x="1404" y="221" width="17" height="13" rx="2.500"/><path d="M1407 221v-1q0-6 5.500-6t5.500 6v1M1412.500 231v-5M1410.500 228l2-2 2 2"/>
<rect x="1449" y="218" width="11" height="11" rx="2"/><rect x="1453" y="221" width="13" height="13" rx="2" fill="#f0f1f5"/><path d="M1459.500 224.500v6M1456.500 227.500h6"/>
<path d="M1503 220h-7q-2 0-2 2v10q0 2 2 2h12q2 0 2-2v-7M1509 216v10M1504 221h10"/></g>

<!-- PHOTO -->
<svg x="941" y="248" width="578" height="743" viewBox="0 0 578 743">
<rect width="578" height="743" fill="#3f4b37"/>
<g filter="url(#b3)">
<rect x="-10" y="-10" width="110" height="185" fill="#d2d0c7"/>
<rect x="100" y="-10" width="72" height="185" fill="#dcd9ce"/>
<rect x="116" y="-10" width="40" height="170" fill="#c9c7bf"/>
<rect x="172" y="-10" width="60" height="185" fill="#bcbda8"/>
<rect x="232" y="-10" width="240" height="130" fill="#b4b3a0"/>
<rect x="440" y="-10" width="150" height="180" fill="#cdcdbc"/>
<rect x="465" y="38" width="120" height="6" fill="#b9b9a6"/>
</g>
<rect x="60" y="186" width="518" height="557" filter="url(#nG)" opacity=".8"/>
<g filter="url(#b12)">
<rect x="-10" y="172" width="110" height="14" fill="#2e3a2b"/>
<rect x="520" y="165" width="70" height="14" fill="#323e2e"/>
<rect x="-10" y="186" width="62" height="570" fill="#4e5946"/>
<ellipse cx="6" cy="240" rx="20" ry="36" fill="#d0cec3"/>
<ellipse cx="20" cy="330" rx="22" ry="52" fill="#7d7062"/>
<ellipse cx="6" cy="450" rx="14" ry="70" fill="#443c33"/>
<ellipse cx="31" cy="545" rx="14" ry="52" fill="#dbdad1"/>
<ellipse cx="8" cy="640" rx="14" ry="70" fill="#2f3a30"/>
<ellipse cx="14" cy="710" rx="24" ry="50" fill="#1f3a3a"/>
<rect x="98" y="380" width="12" height="370" fill="#505b43"/>
<ellipse cx="75" cy="665" rx="18" ry="30" fill="#2e3a2a"/>
<ellipse cx="130" cy="620" rx="16" ry="100" fill="#36412f"/>
<rect x="558" y="430" width="30" height="320" fill="#414c39"/>
</g>
<!-- hair -->
<g filter="url(#b1)">
<path d="M213 0C207 30 206 52 215 66C222 82 226 92 236 90L264 84C274 55 272 25 270 0Z" fill="url(#hairL)"/>
<path d="M403 0C395 25 386 45 392 72C400 88 412 96 424 99L452 104C463 82 470 45 466 20L460 0Z" fill="url(#hairR)"/>
<path d="M218 8q-6 30 6 62M232 4q-4 40 10 72M252 6q-4 30 6 56M415 6q-12 40 2 76M438 4q-2 50 6 88M452 10q6 40-2 76" fill="none" stroke="#4c3b2a" stroke-width="3" opacity=".45"/>
<path d="M225 2q-8 34 4 60M244 4q0 30 6 54M428 8q-10 34 4 64M446 4q4 34-4 66" fill="none" stroke="#a88f6a" stroke-width="3" opacity=".5"/>
</g>
<!-- neck and chin -->
<path d="M277 25L262 82C285 112 340 132 411 104L391 73L390 22Z" fill="#c0a18c"/>
<ellipse cx="334" cy="47" rx="50" ry="6" fill="#8a6e5c" opacity=".6" filter="url(#b3)"/>
<path d="M270 0L283 23L317 40L333 44L363 38L390 20L403 0Z" fill="#d6bca9"/>
<ellipse cx="338" cy="1" rx="16" ry="4" fill="#c68c7a"/>
<!-- arms -->
<path d="M74 361L111 366L125 328L159 375V455C130 430 100 395 74 361Z" fill="url(#arml)"/>
<path d="M509 449L553 439C560 490 566 560 565 610C566 660 572 710 575 743H527C527 690 515 620 498 515L520 479Z" fill="url(#armg)"/>
<path d="M188 537L172 575L168 602L178 600L186 570L190 553Z" fill="#d4ae9a"/>
<!-- jeans -->
<path d="M188 552L175 625L155 743H527C527 680 515 610 498 555L494 535L300 590Z" fill="#17324f"/>
<g clip-path="url(#jc)"><rect x="150" y="540" width="380" height="203" filter="url(#nJ)" opacity=".32"/></g>
<g filter="url(#b12)" fill="#2f5a82" opacity=".35"><ellipse cx="205" cy="668" rx="34" ry="10"/><ellipse cx="265" cy="695" rx="44" ry="10"/><ellipse cx="225" cy="728" rx="40" ry="8"/><ellipse cx="440" cy="680" rx="36" ry="9"/><ellipse cx="420" cy="725" rx="30" ry="7"/></g>
<path d="M345 619H378V743H345Z" fill="#0c1626" opacity=".9" filter="url(#b3)"/>
<path d="M470 620L498 600L527 743H500Z" fill="#0f2238" opacity=".6" filter="url(#b3)"/>
<!-- shirt -->
<path d="M262 83C285 114 340 134 411 104L453 103L520 143C545 175 565 235 578 287V429L509 449L520 479L494 535C440 560 360 580 300 585C260 585 210 565 192 549L170 525L159 455L161 287C140 300 120 340 111 366L74 361L49 307C55 270 80 200 100 170L100 157L140 113L220 87Z" fill="#07090b"/>
<path d="M227 107C260 130 300 145 350 153C390 152 430 130 455 112" fill="none" stroke="#15171a" stroke-width="2"/>
<path d="M222 86q22-8 42-6" fill="none" stroke="#3a3a3c" stroke-width="2" opacity=".7"/>
<!-- belt -->
<path d="M240 578C280 600 310 612 354 619C395 612 450 590 496 555L494 530C440 555 360 580 300 585Z" fill="#06080b"/>
<path d="M254 575h11l-1 38-10-2ZM402 566l14-5 5 52-12 3Z" fill="#1f3f60"/>
<path d="M348 577H322Q306 578 306 596Q306 617 322 617L352 617" fill="none" stroke="#c2b196" stroke-width="2.200"/>
<path d="M310 598h7" stroke="#bcab90" stroke-width="2"/>
<path d="M415 570q40-15 78-35" fill="none" stroke="#28323e" stroke-width="1"/>
<circle cx="213" cy="608" r="4.500" fill="#c8a468"/><circle cx="213" cy="608" r="1.800" fill="#6a5030"/>
<circle cx="246" cy="599" r="4.500" fill="#c8a468"/><circle cx="246" cy="599" r="1.800" fill="#6a5030"/>
<circle cx="426" cy="599" r="3.500" fill="#8a7050"/>
<path d="M177 619C187 632 205 636 217 632C228 628 238 618 241 609M433 604C438 620 447 632 456 634C475 632 495 628 509 619" fill="none" stroke="#8fa3b7" stroke-width="1.200"/>
<path d="M192 555L243 589M273 602L306 612" fill="none" stroke="#7b8ea2" stroke-width="1.200" stroke-dasharray="2 1"/>
<path d="M182 600L212 615M176 618Q200 640 222 638" fill="none" stroke="#7a5a50" stroke-width="1"/>
<path d="M338 622L338 738" stroke="#ccd6e0" stroke-width="1.300"/>
</svg>

<!-- SHIRT GRAPHIC -->
<svg x="1150" y="400" width="280" height="230" viewBox="0 0 840 690">
<g fill="#f6d0d4">
<use href="#st" transform="translate(232,95) scale(.68)"/><use href="#st" transform="translate(478,125) scale(.68)"/><use href="#st" transform="translate(220,297) scale(.7)"/><use href="#st" transform="translate(610,272) scale(.68)"/><use href="#st" transform="translate(393,505) scale(.5)"/>
<use href="#st" transform="translate(295,48) scale(.2)"/><use href="#st" transform="translate(198,58) scale(.09)"/><use href="#st" transform="translate(142,113) scale(.11)"/><use href="#st" transform="translate(130,152) scale(.2)"/><use href="#st" transform="translate(192,145) scale(.09)"/><use href="#st" transform="translate(540,80) scale(.22)"/><use href="#st" transform="translate(443,90) scale(.08)"/><use href="#st" transform="translate(387,145) scale(.1)"/><use href="#st" transform="translate(378,182) scale(.16)"/><use href="#st" transform="translate(437,177) scale(.09)"/><use href="#st" transform="translate(532,145) scale(.08)"/><use href="#st" transform="translate(575,238) scale(.08)"/><use href="#st" transform="translate(673,228) scale(.22)"/><use href="#st" transform="translate(663,292) scale(.09)"/><use href="#st" transform="translate(185,263) scale(.09)"/><use href="#st" transform="translate(130,315) scale(.11)"/><use href="#st" transform="translate(118,355) scale(.22)"/><use href="#st" transform="translate(178,350) scale(.09)"/><use href="#st" transform="translate(302,522) scale(.09)"/><use href="#st" transform="translate(445,522) scale(.09)"/>
</g>
<use href="#gB" x="205" y="100" width="205" height="212"/>
<!-- purple girl -->
<path d="M476 195q4-30 48-32 28 4 30 42l-4 90-8 34h-64q10-30 6-60-12-40-8-74Z" fill="#4338d8"/>
<path d="M490 205q24-18 48 2 2 28-22 38-22-8-26-40Z" fill="#f4dcea"/>
<ellipse cx="503" cy="222" rx="4" ry="5" fill="#7a48c8"/><ellipse cx="526" cy="222" rx="4" ry="5" fill="#7a48c8"/>
<path d="M478 290q36-26 66 0l6 30h-72Z" fill="#c448dc"/><path d="M472 318h78l4 30h-84Z" fill="#3a32d4"/>
<path d="M484 168l-8-8 12 0zM546 170l8-10-12 0z" fill="#d868c8"/>
<use href="#st" transform="translate(510,330) scale(.16)" fill="#f6e0ee"/>
<!-- hat girl -->
<ellipse cx="405" cy="240" rx="70" ry="42" transform="rotate(-10 405 240)" fill="#a99699"/>
<path d="M372 258q-2-30 30-32 32 0 38 30l-6 50q-14 30-20 40l-34-36Z" fill="#444260"/>
<path d="M386 262q16-14 38-2 2 24-16 42-20-12-22-40Z" fill="#e3bfa9"/>
<path d="M392 320Q430 285 470 272L505 298L472 322L490 395L410 410Z" fill="#a18f96"/>
<path d="M470 272l36 22-4 8-34-16Z" fill="#e8c0a4"/>
<path d="M408 405l90-12 14 30-92 14Z" fill="#7d8072"/>
<path d="M425 432L465 425L455 510H430ZM470 425L505 415L490 510H460Z" fill="#f4cdb0"/>
<path d="M430 300l0 50M440 300l6 40" stroke="#444260" stroke-width="5"/>
<!-- glasses girl -->
<path d="M258 370q0-60 55-62 50 6 55 60l4 90-14 20q-30-10-40-50-30-10-60-58Z" fill="#8d5337"/>
<path d="M266 360q25-14 52 0 6 30-16 50-28-6-36-50Z" fill="#f6cdb8"/>
<circle cx="278" cy="372" r="10" fill="none" stroke="#7a6a66" stroke-width="2"/><circle cx="304" cy="372" r="10" fill="none" stroke="#7a6a66" stroke-width="2"/>
<path d="M248 510q4-60 40-88l62 40-14 48Z" fill="#f2ecf4"/>
<path d="M238 408l12-10 24 28-6 18Z" fill="#f0b09a"/>
<use href="#gA" x="512" y="306" width="156" height="205"/>
<text x="165" y="606" style="font-family:'Liberation Serif',serif;font-style:italic" font-size="96" fill="#ea5cbc" textLength="585" lengthAdjust="spacingAndGlyphs"><tspan font-size="128">G</tspan>irly <tspan font-size="128">T</tspan>hing</text>
</svg>

<!-- ADD PAGE -->
<rect x="942.500" y="1022.500" width="577" height="44.500" rx="8" fill="none" stroke="#a9abb0" stroke-width="1.200"/>
<rect x="1479" y="1023" width="1" height="44" fill="#b3b5ba"/>
<text x="1162" y="1051" font-size="17" fill="#2b2f36" stroke="#2b2f36" stroke-width=".45" textLength="98" lengthAdjust="spacingAndGlyphs">+ Add page</text>
<rect x="1479" y="1017" width="44" height="20" rx="10" fill="#8b3dff"/>
<text x="1487" y="1032" font-size="14" class="w" style="stroke-width:.4" textLength="29" lengthAdjust="spacingAndGlyphs">New</text>
<path d="M1494 1042l4 4 4-4" fill="none" stroke="#1f2126" stroke-width="1.800"/>

<!-- BOTTOM BAR -->
<path class="dk" style="stroke-width:1.700" d="M562 1109h12M562 1115h8M562 1121h6M572 1123l2-5 8-8q2-1 3 0t0 3l-8 8Z"/>
<text x="591" y="1121" font-size="17.500" fill="#2b2f36" stroke="#2b2f36" stroke-width=".25" textLength="50" lengthAdjust="spacingAndGlyphs">Notes</text>
<rect x="1180" y="1113" width="248" height="4" rx="2" fill="#d6d8dc"/>
<rect x="1180" y="1113" width="80" height="4" rx="2" fill="#acb0b8"/>
<circle cx="1263" cy="1115" r="12" fill="#fff" filter="drop-shadow(0 1px 2px rgba(0,0,0,.3))"/>
<text x="1462" y="1121" font-size="17.500" fill="#2b2f36" stroke="#2b2f36" stroke-width=".25" textLength="36" lengthAdjust="spacingAndGlyphs">34%</text>
<rect x="1532" y="1104" width="1" height="22" fill="#d2d4d8"/>
<g class="dk"><rect x="1553" y="1105" width="21" height="14" rx="1.500"/><path d="M1553 1122h21M1553 1125.500h21v1.500h-21ZM1560 1122v5M1567 1122v5"/></g>
<text x="1584" y="1121" font-size="17.500" fill="#2b2f36" stroke="#2b2f36" stroke-width=".25" textLength="48" lengthAdjust="spacingAndGlyphs">Pages</text>
<text x="1663" y="1121" font-size="17.500" fill="#2b2f36" stroke="#2b2f36" stroke-width=".25" textLength="36" lengthAdjust="spacingAndGlyphs">1 / 1</text>
<g class="dk"><rect x="1731" y="1106" width="7.500" height="7.500" rx="1.500"/><rect x="1742" y="1106" width="7.500" height="7.500" rx="1.500"/><rect x="1731" y="1117" width="7.500" height="7.500" rx="1.500"/><rect x="1742" y="1117" width="7.500" height="7.500" rx="1.500"/></g>
<path class="dk" d="M1793 1112l7-7M1794 1106h6v6M1787 1118l-7 7M1780 1119v6h6"/>
<circle cx="1840" cy="1115" r="11.500" class="dk"/><path class="dk" style="stroke-width:1.500" d="M1835 1115l4 4 6-8"/>
<circle cx="1889" cy="1115" r="11.500" class="dk"/>
<text x="1889" y="1121" font-size="15" fill="#2b2f36" text-anchor="middle">?</text>

<!-- TASKBAR -->
<path d="M28 1168q2-12 12-14l2 14Z" fill="#f2b04c"/>
<path d="M27 1184q-3-7 3-10 2-8 10-8 8 0 10 7 6 2 5 7-1 4-5 4Z" fill="#a8c6de"/>
<circle cx="49" cy="1158" r="9.500" fill="#c4281c"/>
<text x="49" y="1163" font-size="14" fill="#fff" text-anchor="middle">6</text>
<text x="64" y="1164.500" class="tb" textLength="32" lengthAdjust="spacingAndGlyphs">25°C</text>
<text x="64" y="1185" class="tb" style="fill:#575b4b" textLength="95" lengthAdjust="spacingAndGlyphs">Mostly cloudy</text>
<rect x="475" y="1156" width="14" height="14" fill="#2ab2f0"/><rect x="490" y="1156" width="14" height="14" fill="#2ab2f0"/><rect x="475" y="1171" width="14" height="14" fill="#0d87da"/><rect x="490" y="1171" width="14" height="14" fill="#0d87da"/>
<rect x="522.500" y="1151.500" width="272.500" height="37.500" rx="19" fill="#f6f6e8" stroke="#d4d5bf"/>
<circle cx="544" cy="1168" r="6.500" fill="none" stroke="#2a2a2a" stroke-width="1.800"/><path d="M548 1173l4 6" stroke="#2a2a2a" stroke-width="2"/>
<text x="568" y="1176" font-size="16" fill="#4c4e44" textLength="50" lengthAdjust="spacingAndGlyphs">Search</text>
<g><path d="M730 1172q16-4 20-6l6-14 4 8 8-2 4-6 3 12 18 8-4 6H738Z" fill="#c79a58"/><path d="M732 1176h60q2 6-12 11-30 2-46-2Z" fill="#3aa4a8"/><path d="M742 1180l14-3 4 3-14 3Z" fill="#e8ece8"/><path d="M746 1167h14v6h-14zM764 1164h10v8h-10z" fill="#a0443a"/></g>
<rect x="819" y="1156" width="21" height="21" fill="#f0f0ee"/><rect x="825" y="1164" width="15" height="16" fill="#c8c8c8"/><rect x="811" y="1170" width="22" height="14" fill="#1c1c1c"/><rect x="811" y="1164" width="14" height="6" fill="#303030"/>
<path d="M879 1156q6-2 9 2l8 4q2 8-2 16-4 8-10 7-5 0-6-4l-6-3q-4-10 0-16 3-6 7-6Z" fill="url(#cop)"/>
<path d="M880 1161q5-2 6 3l-3 12q-2 4-5 1Z" fill="#f6f0d0" opacity=".9"/>
<path d="M920 1160q0-3 3-3h8l3 3h17v25h-31Z" fill="#e8a923"/><rect x="920" y="1165" width="31" height="20" fill="#f7cf52"/><rect x="928" y="1176" width="15" height="7" rx="1" fill="#1e7fc9"/>
<circle cx="990.500" cy="1170" r="15" fill="url(#edge)"/>
<path d="M976 1168q2-13 15-13 14 0 15 14 0 8-8 8-7 0-8-4 8 0 7-5-2-7-12-6-7 1-9 6Z" fill="#4fd28e"/>
<path d="M984 1172q0 8 9 8 6 0 10-3-5 8-14 7-9-2-10-10Z" fill="#9ad8f4"/>
<circle cx="990.500" cy="1192" r="2" fill="#777"/>
<path d="M1034 1160h22l3 23q0 2-3 2h-22q-3 0-3-2Z" fill="#174b7e"/><path d="M1039 1160q0-4 6-4t6 4" fill="none" stroke="#2ab0e0" stroke-width="2"/>
<rect x="1039" y="1165" width="5.500" height="5.500" fill="#f25022"/><rect x="1045.500" y="1165" width="5.500" height="5.500" fill="#7fba00"/><rect x="1039" y="1171.500" width="5.500" height="5.500" fill="#00a4ef"/><rect x="1045.500" y="1171.500" width="5.500" height="5.500" fill="#ffb900"/>
<rect x="1085" y="1155" width="30" height="29" fill="#f6f6f4"/>
<text x="1100" y="1175" font-size="27" fill="#8e8e8e" text-anchor="middle">a</text>
<g fill="#d94a6c"><circle cx="1089" cy="1180" r="1.300"/></g><g fill="#e8a030"><circle cx="1094" cy="1180" r="1.300"/></g><g fill="#58a858"><circle cx="1099" cy="1180" r="1.300"/></g><g fill="#4a80d0"><circle cx="1104" cy="1180" r="1.300"/></g><g fill="#a850c0"><circle cx="1109" cy="1180" r="1.300"/></g>
<g fill="#0a0a0a"><path d="M1148 1157l7 5-7 5-7-5ZM1162 1157l7 5-7 5-7-5ZM1148 1167l7 5-7 5-7-5ZM1162 1167l7 5-7 5-7-5ZM1155 1174l7 5-7 5-7-5Z"/></g>
<path d="M1210 1155a14.500 14 0 0 1 8 26q-3 2-8 2l-6 3-1-5q-9-6-8-13 1-12 15-13Z" fill="#1f78ee"/>
<path d="M1202 1172l6-8 4 4 6-4-6 8-4-4Z" fill="#fff"/>
<circle cx="1221" cy="1159" r="9.500" fill="#1f78ee"/><text x="1221" y="1164" font-size="13.500" fill="#fff" text-anchor="middle">3</text>
<circle cx="1210" cy="1192" r="2" fill="#777"/>
<g fill="none" stroke="#111" stroke-width="1.700" transform="translate(1265,1170)"><rect x="-4.500" y="-14" width="9" height="20" rx="4.500"/><rect x="-4.500" y="-14" width="9" height="20" rx="4.500" transform="rotate(60)"/><rect x="-4.500" y="-14" width="9" height="20" rx="4.500" transform="rotate(120)"/><rect x="-4.500" y="-14" width="9" height="20" rx="4.500" transform="rotate(180)"/><rect x="-4.500" y="-14" width="9" height="20" rx="4.500" transform="rotate(240)"/><rect x="-4.500" y="-14" width="9" height="20" rx="4.500" transform="rotate(300)"/></g>
<circle cx="1320" cy="1170" r="15" fill="#1877f2"/>
<text x="1323" y="1185" font-size="28" font-weight="700" fill="#fff" text-anchor="middle">f</text>
<rect x="1352" y="1146" width="48" height="47" rx="5" fill="#fff" fill-opacity=".55"/>
<circle cx="1375" cy="1170" r="15" fill="url(#cv)"/>
<text x="1375" y="1174" font-size="10" style="font-family:'Liberation Serif',serif;font-style:italic" fill="#fff" text-anchor="middle">Canva</text>
<circle cx="1388" cy="1158" r="9.500" fill="#2b2b2b"/><text x="1388" y="1163" font-size="13.500" fill="#fff" text-anchor="middle">1</text>
<rect x="1366" y="1190" width="20" height="4" rx="2" fill="#1a78d6"/>
<path d="M1594 1174l6-7 6 7" fill="none" stroke="#222" stroke-width="1.600"/>
<path d="M1634 1176q-3-4 1-8 1-5 6-6 6 0 7 6 3 3 1 7-2 2-5 2h-8ZM1632 1162l17 17" fill="none" stroke="#222" stroke-width="1.600"/>
<text x="1674" y="1166" font-size="14.500" fill="#2a2a2a" textLength="30" lengthAdjust="spacingAndGlyphs">ENG</text>
<text x="1680" y="1186" font-size="14.500" fill="#2a2a2a" textLength="18" lengthAdjust="spacingAndGlyphs">US</text>
<path d="M1726 1165q10-8 20 0M1729 1169q7-5 14 0M1732 1173q4-3 8 0" fill="none" stroke="#222" stroke-width="1.500"/><circle cx="1736" cy="1177" r="1.600" fill="#222"/>
<path d="M1756 1166h4l5-4v16l-5-4h-4ZM1768 1165q3 5 0 10" fill="none" stroke="#222" stroke-width="1.400"/><path d="M1771 1162q5 8 0 16" fill="none" stroke="#999" stroke-width="1.200"/>
<rect x="1787" y="1163" width="16" height="14" rx="3" fill="none" stroke="#222" stroke-width="1.500"/><rect x="1790" y="1166" width="10" height="8" fill="#222"/><rect x="1804" y="1168" width="2" height="4" fill="#222"/>
<text x="1842" y="1165" font-size="14.500" fill="#2a2a2a" textLength="53" lengthAdjust="spacingAndGlyphs">9:43 PM</text>
<text x="1827" y="1186" font-size="14.500" fill="#2a2a2a" textLength="68" lengthAdjust="spacingAndGlyphs">6/23/2025</text>
</svg>
</body></html>
